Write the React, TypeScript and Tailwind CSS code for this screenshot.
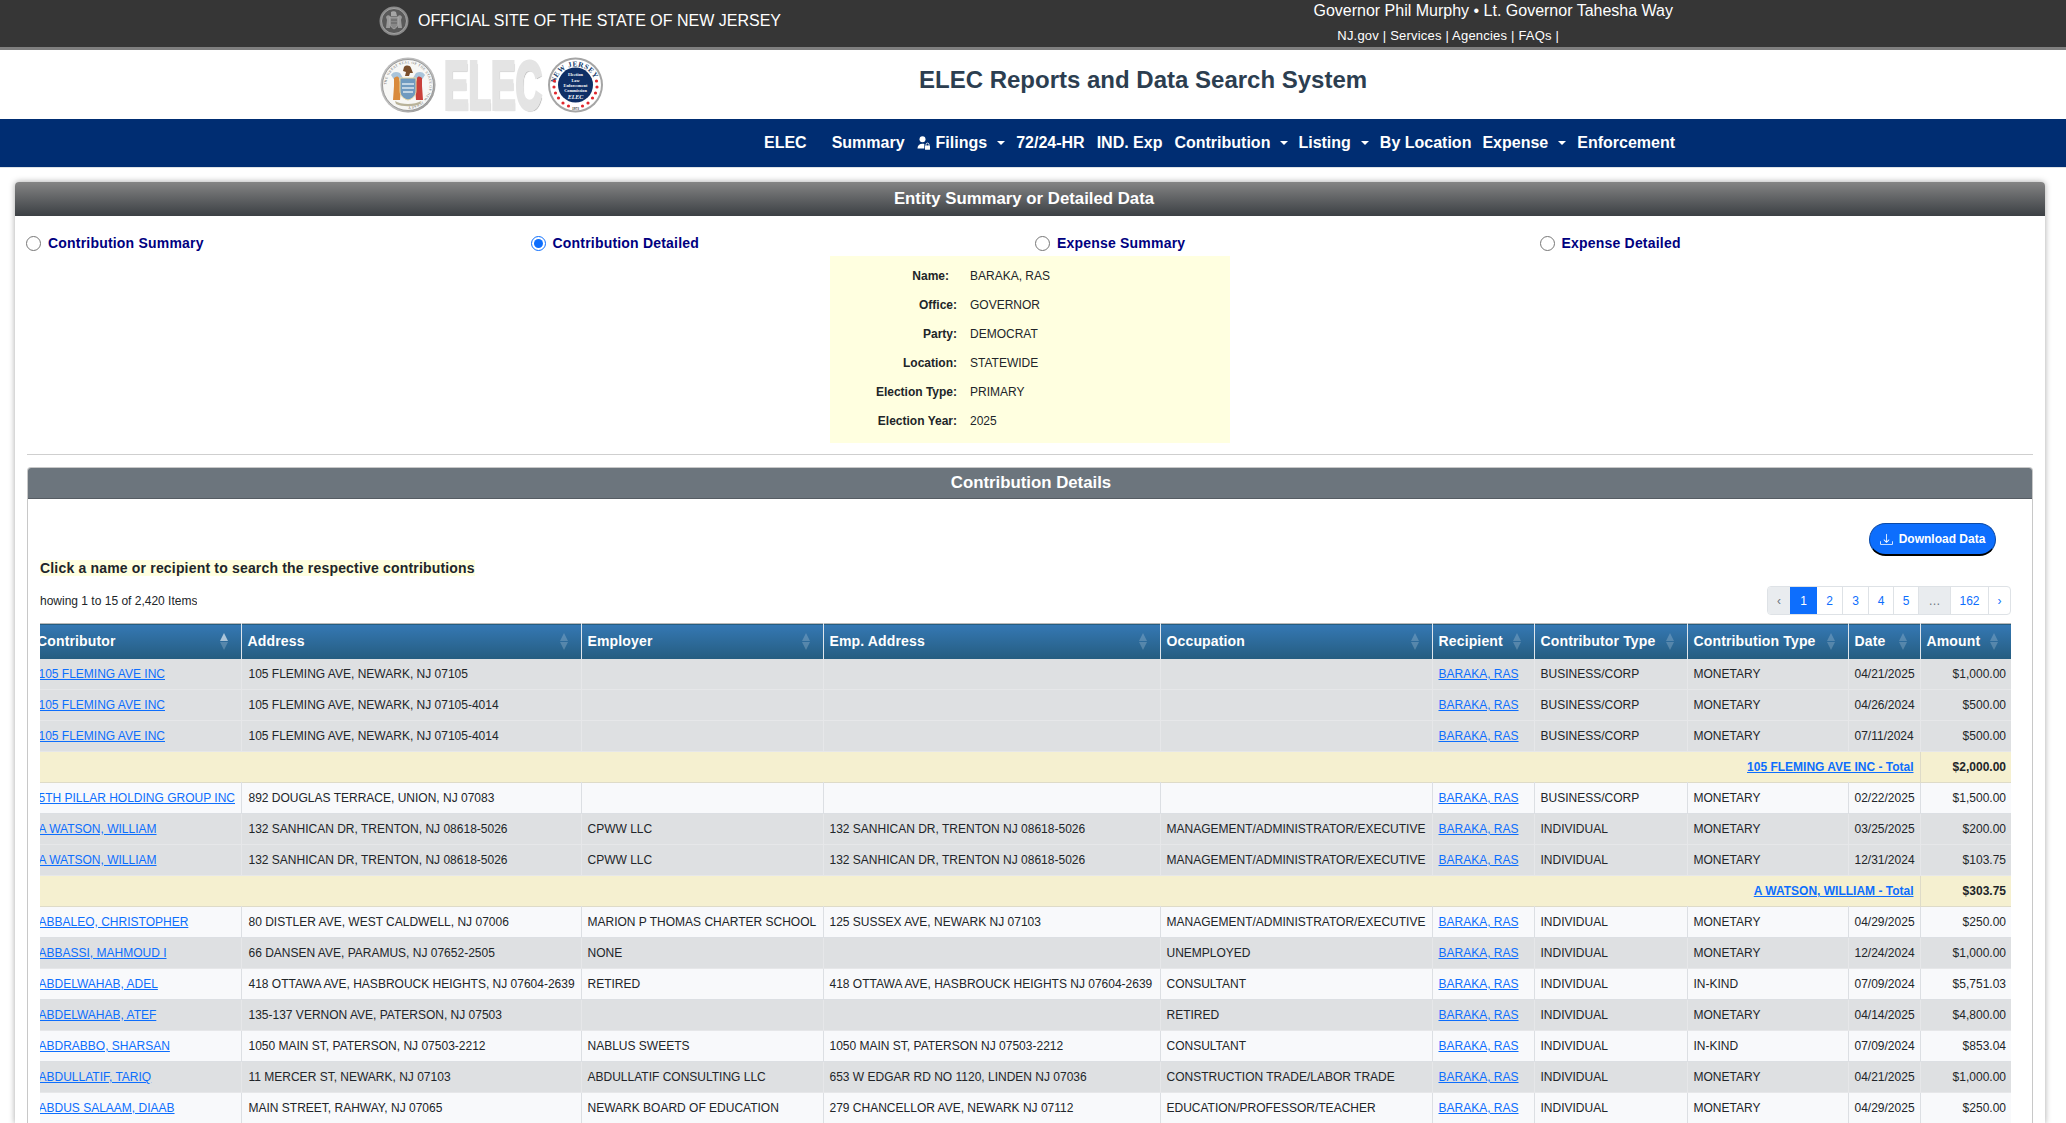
const font = "[font-family:'Liberation_Sans',Arial,sans-serif]";

interface Row {
  contributor?: string;
  address?: string;
  employer?: string;
  empAddress?: string;
  occupation?: string;
  type?: string;
  kind?: string;
  date?: string;
  amount: string;
  total?: string;
  shade?: boolean;
}

const MGMT = "MANAGEMENT/ADMINISTRATOR/EXECUTIVE";

const rows: Row[] = [
  { shade: true, contributor: "105 FLEMING AVE INC", address: "105 FLEMING AVE, NEWARK, NJ 07105", type: "BUSINESS/CORP", kind: "MONETARY", date: "04/21/2025", amount: "$1,000.00" },
  { shade: true, contributor: "105 FLEMING AVE INC", address: "105 FLEMING AVE, NEWARK, NJ 07105-4014", type: "BUSINESS/CORP", kind: "MONETARY", date: "04/26/2024", amount: "$500.00" },
  { shade: true, contributor: "105 FLEMING AVE INC", address: "105 FLEMING AVE, NEWARK, NJ 07105-4014", type: "BUSINESS/CORP", kind: "MONETARY", date: "07/11/2024", amount: "$500.00" },
  { total: "105 FLEMING AVE INC - Total", amount: "$2,000.00" },
  { contributor: "5TH PILLAR HOLDING GROUP INC", address: "892 DOUGLAS TERRACE, UNION, NJ 07083", type: "BUSINESS/CORP", kind: "MONETARY", date: "02/22/2025", amount: "$1,500.00" },
  { shade: true, contributor: "A WATSON, WILLIAM", address: "132 SANHICAN DR, TRENTON, NJ 08618-5026", employer: "CPWW LLC", empAddress: "132 SANHICAN DR, TRENTON NJ 08618-5026", occupation: MGMT, type: "INDIVIDUAL", kind: "MONETARY", date: "03/25/2025", amount: "$200.00" },
  { shade: true, contributor: "A WATSON, WILLIAM", address: "132 SANHICAN DR, TRENTON, NJ 08618-5026", employer: "CPWW LLC", empAddress: "132 SANHICAN DR, TRENTON NJ 08618-5026", occupation: MGMT, type: "INDIVIDUAL", kind: "MONETARY", date: "12/31/2024", amount: "$103.75" },
  { total: "A WATSON, WILLIAM - Total", amount: "$303.75" },
  { contributor: "ABBALEO, CHRISTOPHER", address: "80 DISTLER AVE, WEST CALDWELL, NJ 07006", employer: "MARION P THOMAS CHARTER SCHOOL", empAddress: "125 SUSSEX AVE, NEWARK NJ 07103", occupation: MGMT, type: "INDIVIDUAL", kind: "MONETARY", date: "04/29/2025", amount: "$250.00" },
  { shade: true, contributor: "ABBASSI, MAHMOUD I", address: "66 DANSEN AVE, PARAMUS, NJ 07652-2505", employer: "NONE", occupation: "UNEMPLOYED", type: "INDIVIDUAL", kind: "MONETARY", date: "12/24/2024", amount: "$1,000.00" },
  { contributor: "ABDELWAHAB, ADEL", address: "418 OTTAWA AVE, HASBROUCK HEIGHTS, NJ 07604-2639", employer: "RETIRED", empAddress: "418 OTTAWA AVE, HASBROUCK HEIGHTS NJ 07604-2639", occupation: "CONSULTANT", type: "INDIVIDUAL", kind: "IN-KIND", date: "07/09/2024", amount: "$5,751.03" },
  { shade: true, contributor: "ABDELWAHAB, ATEF", address: "135-137 VERNON AVE, PATERSON, NJ 07503", occupation: "RETIRED", type: "INDIVIDUAL", kind: "MONETARY", date: "04/14/2025", amount: "$4,800.00" },
  { contributor: "ABDRABBO, SHARSAN", address: "1050 MAIN ST, PATERSON, NJ 07503-2212", employer: "NABLUS SWEETS", empAddress: "1050 MAIN ST, PATERSON NJ 07503-2212", occupation: "CONSULTANT", type: "INDIVIDUAL", kind: "IN-KIND", date: "07/09/2024", amount: "$853.04" },
  { shade: true, contributor: "ABDULLATIF, TARIQ", address: "11 MERCER ST, NEWARK, NJ 07103", employer: "ABDULLATIF CONSULTING LLC", empAddress: "653 W EDGAR RD NO 1120, LINDEN NJ 07036", occupation: "CONSTRUCTION TRADE/LABOR TRADE", type: "INDIVIDUAL", kind: "MONETARY", date: "04/21/2025", amount: "$1,000.00" },
  { contributor: "ABDUS SALAAM, DIAAB", address: "MAIN STREET, RAHWAY, NJ 07065", employer: "NEWARK BOARD OF EDUCATION", empAddress: "279 CHANCELLOR AVE, NEWARK NJ 07112", occupation: "EDUCATION/PROFESSOR/TEACHER", type: "INDIVIDUAL", kind: "MONETARY", date: "04/29/2025", amount: "$250.00" },
];

const columns = ["Contributor", "Address", "Employer", "Emp. Address", "Occupation", "Recipient", "Contributor Type", "Contribution Type", "Date", "Amount"];

const info = [
  ["Name:", "BARAKA, RAS"],
  ["Office:", "GOVERNOR"],
  ["Party:", "DEMOCRAT"],
  ["Location:", "STATEWIDE"],
  ["Election Type:", "PRIMARY"],
  ["Election Year:", "2025"],
];

const Caret = () => (
  <span className="ml-[10px] inline-block h-0 w-0 border-x-[4px] border-t-[4px] border-x-transparent border-t-white" />
);

const SortIcon = ({ active }: { active?: boolean }) => (
  <span className="flex shrink-0 flex-col items-center gap-[1px]">
    <span className={`h-0 w-0 border-x-[4.5px] border-b-[8px] border-x-transparent ${active ? "border-b-white/60" : "border-b-white/20"}`} />
    <span className="h-0 w-0 border-x-[4.5px] border-t-[8px] border-x-transparent border-t-white/20" />
  </span>
);

const SmallSeal = () => (
  <svg viewBox="0 0 30 30" className="h-[30px] w-[30px]">
    <circle cx="15" cy="15" r="14.5" fill="#8a8a8a" />
    <circle cx="15" cy="15" r="12.5" fill="#5a5a5a" stroke="#b0b0b0" strokeWidth="0.8" />
    <path d="M7 11c1-2 3-2 4-1l1 3-1 9H7l1-8zM23 11c-1-2-3-2-4-1l-1 3 1 9h4l-1-8z" fill="#9a9a9a" />
    <path d="M12 6c1-1 4-1 5 0l1 4h-6z" fill="#a5a5a5" />
    <path d="M11 11h8v7c0 2-2 4-4 5-2-1-4-3-4-5z" fill="#888" stroke="#bbb" strokeWidth="0.6" />
    <path d="M12 14h6M12 17h6" stroke="#555" strokeWidth="0.8" />
  </svg>
);

const StateSeal = () => (
  <svg viewBox="0 0 56 56" className="h-[56px] w-[56px] shrink-0">
    <defs>
      <path id="ringB" d="M28 28m-21.5 0a21.5 21.5 0 1 1 43 0a21.5 21.5 0 1 1 -43 0" />
      <radialGradient id="sealEdge" cx="0.45" cy="0.45" r="0.6">
        <stop offset="0.85" stopColor="#bdbdbd" />
        <stop offset="1" stopColor="#7d7d7d" />
      </radialGradient>
    </defs>
    <circle cx="28" cy="28" r="27.5" fill="url(#sealEdge)" />
    <circle cx="28" cy="28" r="25.5" fill="#f7f7f5" stroke="#8a8a8a" strokeWidth="0.8" />
    <text fontSize="3.6" fill="#666" fontFamily="Liberation Serif, serif" letterSpacing="0.45">
      <textPath href="#ringB">THE GREAT SEAL OF THE STATE OF NEW JERSEY</textPath>
    </text>
    <path d="M11 18c3-4 6-3 9-2l3 5-8 3zM45 18c-3-4-6-3-9-2l-3 5 8 3z" fill="#a9c4da" />
    <path d="M14 21c2-2 4-2 5 0l2 8-1 14h-7l1-14z" fill="#d98a3c" />
    <path d="M42 21c-2-2-4-2-5 0l-2 8 1 14h7l-1-14z" fill="#c9403a" />
    <path d="M24 10c2-2 6-2 7 1l2 5h-3l-1 3h-4l1-4-3-1z" fill="#7a4f2c" />
    <path d="M20 21h16v13c0 5-4 8-8 9-4-1-8-4-8-9z" fill="#6f9ac0" stroke="#e8d8a0" strokeWidth="1" />
    <path d="M22 27h12M22 31h12M23 35h10" stroke="#dce8f0" strokeWidth="1.4" />
    <path d="M15 44c6 4 20 4 26 0l-1 3c-6 3-18 3-24 0z" fill="#b9b39a" />
  </svg>
);

const ElecSeal = () => (
  <svg viewBox="0 0 56 56" className="h-[56px] w-[57px] shrink-0">
    <defs>
      <path id="elecRing" d="M7.5 30a20.5 20.5 0 0 1 41 0" />
    </defs>
    <circle cx="28" cy="28" r="27.5" fill="#a5a5a5" />
    <circle cx="28" cy="28" r="25.5" fill="#fff" />
    <text fontSize="7.4" fontWeight="700" fill="#123a6b" fontFamily="Liberation Serif, serif" letterSpacing="0.4">
      <textPath href="#elecRing" startOffset="6%">NEW JERSEY</textPath>
    </text>
    <circle cx="28" cy="28" r="17.5" fill="#0e2f66" />
    {[
      [7, 24], [6.5, 30], [8, 36], [11, 41], [15.5, 46], [21, 49], [35, 49], [40.5, 46], [45, 41], [48, 36], [49.5, 30], [49, 24],
    ].map(([x, y]) => (
      <circle key={`${x}-${y}`} cx={x} cy={y} r="1.6" fill="#e0262c" />
    ))}
    <g fill="#fff" fontFamily="Liberation Serif, serif" fontWeight="700" textAnchor="middle" fontSize="4.3">
      <text x="28" y="19">Election</text>
      <text x="28" y="24.5">Law</text>
      <text x="28" y="30">Enforcement</text>
      <text x="28" y="35">Commission</text>
      <text x="28" y="42" fontSize="6" fontStyle="italic">ELEC</text>
    </g>
    <text x="28" y="53" fontSize="3.6" fontWeight="700" fill="#333" textAnchor="middle" fontFamily="Liberation Serif, serif">1973</text>
  </svg>
);

const UserLockIcon = () => (
  <svg viewBox="0 0 13 14" className="mr-[6px] h-[14px] w-[13px]" fill="#fff">
    <circle cx="5.5" cy="3.2" r="3" />
    <path d="M0.5 12.5c0-3 2-4.8 5-4.8 0.7 0 1.3 0.1 1.8 0.3v4.5z" />
    <rect x="8" y="9.6" width="5" height="4.2" rx="0.6" />
    <path d="M9 9.8V8.6a1.5 1.5 0 0 1 3 0v1.2" fill="none" stroke="#fff" strokeWidth="0.9" />
  </svg>
);

const DownloadIcon = () => (
  <svg viewBox="0 0 16 16" className="h-[13px] w-[13px]" fill="#fff">
    <path d="M.5 9.9a.5.5 0 0 1 .5.5v2.5a1 1 0 0 0 1 1h12a1 1 0 0 0 1-1v-2.5a.5.5 0 0 1 1 0v2.5a2 2 0 0 1-2 2H2a2 2 0 0 1-2-2v-2.5a.5.5 0 0 1 .5-.5z" />
    <path d="M7.646 11.854a.5.5 0 0 0 .708 0l3-3a.5.5 0 0 0-.708-.708L8.5 10.293V1.5a.5.5 0 0 0-1 0v8.793L5.354 8.146a.5.5 0 1 0-.708.708l3 3z" />
  </svg>
);

const Radio = ({ label, checked }: { label: string; checked?: boolean }) => (
  <label className="flex items-center gap-[7px]">
    <input type="radio" name="view" defaultChecked={checked} className="m-0 h-[15px] w-[15px] accent-[#0d6efd]" />
    <span className="text-[14px] leading-[18px] font-bold tracking-[0.2px] text-[#000080]">{label}</span>
  </label>
);

const Link = ({ children }: { children: string }) => (
  <a href="#" className="text-[#0d6efd] underline">{children}</a>
);

const Pager = () => {
  const cell = "flex h-full items-center justify-center border-l border-[#dee2e6]";
  return (
    <div className="flex h-[29px] overflow-hidden rounded-[4px] border border-[#dee2e6] text-[12px] text-[#0d6efd]">
      <span className="flex w-[22px] items-center justify-center bg-[#e9ecef] text-[#6c757d]">‹</span>
      <span className="flex w-[27px] items-center justify-center bg-[#0d6efd] text-white">1</span>
      <span className="flex w-[25px] items-center justify-center">2</span>
      <span className={`${cell} w-[26px]`}>3</span>
      <span className={`${cell} w-[25px]`}>4</span>
      <span className={`${cell} w-[25px]`}>5</span>
      <span className={`${cell} w-[32px] bg-[#e9ecef] text-[#6c757d]`}>…</span>
      <span className={`${cell} w-[38px]`}>162</span>
      <span className={`${cell} w-[22px]`}>›</span>
    </div>
  );
};

export default function App() {
  return (
    <div className={`h-[1123px] overflow-hidden bg-white ${font}`}>
      {/* State banner */}
      <div className="flex h-[50px] border-b-[3px] border-[#7f7f7f] bg-[#363636] text-white">
        <div className="flex h-[42px] items-center pl-[379px]">
          <SmallSeal />
          <span className="ml-[9px] text-[16px]">OFFICIAL SITE OF THE STATE OF NEW JERSEY</span>
        </div>
        <div className="mr-[393px] ml-auto flex flex-col items-center">
          <span className="mt-[2px] text-[16px] leading-[18px]">Governor Phil Murphy • Lt. Governor Tahesha Way</span>
          <span className="mt-[8px] mr-[90px] text-[13px] leading-[16px] tracking-[0.2px]">NJ.gov | Services | Agencies | FAQs |</span>
        </div>
      </div>

      {/* Logo + title */}
      <div className="flex h-[69px] items-center">
        <div className="ml-[380px] flex w-[227px] items-center">
          <StateSeal />
          <span className="ml-[8px] w-[103px] origin-left scale-x-[0.54] text-[68px] leading-none font-bold text-[#e4e4e4] [-webkit-text-stroke:4px_#e4e4e4] [text-shadow:2px_2px_1px_#9c9c9c]">ELEC</span>
          <ElecSeal />
        </div>
        <h1 className="mb-[10px] ml-[312px] text-[24px] font-bold text-[#2c3e50]">ELEC Reports and Data Search System</h1>
      </div>

      {/* Nav */}
      <nav className="flex h-[49px] items-center border-b border-[#dee2e6] bg-[#002d72] pl-[764px] text-[16px] font-bold text-white">
        <span>ELEC</span>
        <span className="ml-[25px]">Summary</span>
        <span className="ml-[12px] flex items-center"><UserLockIcon />Filings<Caret /></span>
        <span className="ml-[11px]">72/24-HR</span>
        <span className="ml-[12px]">IND. Exp</span>
        <span className="ml-[12px] flex items-center">Contribution<Caret /></span>
        <span className="ml-[10px] flex items-center">Listing<Caret /></span>
        <span className="ml-[11px]">By Location</span>
        <span className="ml-[11px] flex items-center">Expense<Caret /></span>
        <span className="ml-[11px]">Enforcement</span>
      </nav>

      {/* Outer panel */}
      <div className="mt-[14px] ml-[15px] w-[2030px] rounded-t-[4px] shadow-[0_0_6px_rgba(0,0,0,0.35)]">
        <div className="flex h-[34px] items-center justify-center rounded-t-[4px] bg-gradient-to-b from-[#858585] to-[#3c4044] pr-[12px] text-[16.8px] font-bold text-white">
          Entity Summary or Detailed Data
        </div>
        <div className="bg-white px-[12px]">
          <div className="-ml-[1px] grid w-[2018px] grid-cols-4 pt-[18px]">
            <Radio label="Contribution Summary" />
            <Radio label="Contribution Detailed" checked />
            <Radio label="Expense Summary" />
            <Radio label="Expense Detailed" />
          </div>

          <div className="mx-auto mt-[4px] grid w-[400px] grid-cols-[127px_1fr] gap-x-[13px] bg-[#ffffe0] pt-[6px] pb-[7px] text-[12px] leading-[29px] text-[#212529]">
            {info.map(([k, v]) => (
              <div key={k} className="contents">
                <span className={`text-right font-bold ${k === "Name:" ? "pr-[8px]" : ""}`}>{k}</span>
                <span>{v}</span>
              </div>
            ))}
          </div>

          <hr className="mt-[11px] border-[#cfcfcf]" />

          {/* Inner panel */}
          <div className="mt-[12px] rounded-t-[4px] border-x border-t border-[#c8c8c8]">
            <div className="flex h-[31px] items-center justify-center rounded-t-[3px] border-b border-[#555c63] bg-[#6c757d] pl-[2px] text-[16.8px] font-bold text-white">
              Contribution Details
            </div>
            <div className="pt-[24px] pr-[21px] pl-[12px]">
              <div className="flex justify-end pr-[15px]">
                <button className="flex h-[33px] w-[127px] items-center justify-center gap-[6px] rounded-full border border-b-2 border-[#0a4aa8] border-b-black bg-[#0d6efd] text-[12px] font-bold text-white">
                  <DownloadIcon />
                  Download Data
                </button>
              </div>
              <p className="mt-[3px] text-[14px] leading-[18px] font-bold tracking-[0.18px] text-[#212529]">
                <span className="bg-[#ffffe0]">Click a name or recipient to search the respective contributions</span>
              </p>
              <div className="mt-[9px] flex h-[29px] items-center justify-between">
                <div className="overflow-hidden">
                  <div className="-ml-[8px] text-[12px] text-[#212529]">Showing 1 to 15 of 2,420 Items</div>
                </div>
                <Pager />
              </div>

              <div className="mt-[8px] overflow-hidden">
                <table className="-ml-[7px] w-[1978px] table-fixed border-collapse text-[12px] text-[#212529]">
                  <colgroup>
                    <col className="w-[208px]" />
                    <col className="w-[340px]" />
                    <col className="w-[242px]" />
                    <col className="w-[337px]" />
                    <col className="w-[272px]" />
                    <col className="w-[102px]" />
                    <col className="w-[153px]" />
                    <col className="w-[161px]" />
                    <col className="w-[72px]" />
                    <col className="w-[91px]" />
                  </colgroup>
                  <thead>
                    <tr className="h-[35px] border-t border-[#b9b9b9] bg-gradient-to-b from-[#3578b4] to-[#255d80] text-[14px] text-white">
                      {columns.map((c, i) => (
                        <th key={c} className="border-l border-[#dfe6ec] p-0 font-bold first:border-l-0">
                          <div className={`flex items-center justify-between pr-[13px] text-left tracking-[0.15px] ${i === 0 ? "pl-[4px]" : "pl-[6px]"}`}>
                            <span>{c}</span>
                            <SortIcon active={i === 0} />
                          </div>
                        </th>
                      ))}
                    </tr>
                  </thead>
                  <tbody>
                    {rows.map((r, i) => {
                      if (r.total) {
                        return (
                          <tr key={i} className="h-[31px] border-b border-[#dedbc8] bg-[#f5f0d0]">
                            <td colSpan={9} className="py-0 pr-[6px] text-right font-bold"><Link>{r.total}</Link></td>
                            <td className="border-l border-[#dedbc8] py-0 pr-[5px] text-right font-bold">{r.amount}</td>
                          </tr>
                        );
                      }
                      const td = `whitespace-nowrap border-l py-0 pl-[6px] ${r.shade ? "border-[#e6e7e9]" : "border-[#dcdfe3]"}`;
                      return (
                        <tr key={i} className={`h-[31px] border-b ${r.shade ? "border-[#e6e7e9] bg-[#dee0e2]" : "border-[#dcdfe3] bg-[#f8f9fb]"}`}>
                          <td className="whitespace-nowrap py-0 pl-[5.5px]"><Link>{r.contributor!}</Link></td>
                          <td className={`${td} pl-[7px]`}>{r.address}</td>
                          <td className={td}>{r.employer}</td>
                          <td className={td}>{r.empAddress}</td>
                          <td className={td}>{r.occupation}</td>
                          <td className={td}><Link>BARAKA, RAS</Link></td>
                          <td className={td}>{r.type}</td>
                          <td className={td}>{r.kind}</td>
                          <td className={td}>{r.date}</td>
                          <td className={`${td} pr-[5px] text-right`}>{r.amount}</td>
                        </tr>
                      );
                    })}
                  </tbody>
                </table>
              </div>
            </div>
          </div>
        </div>
      </div>
    </div>
  );
}
